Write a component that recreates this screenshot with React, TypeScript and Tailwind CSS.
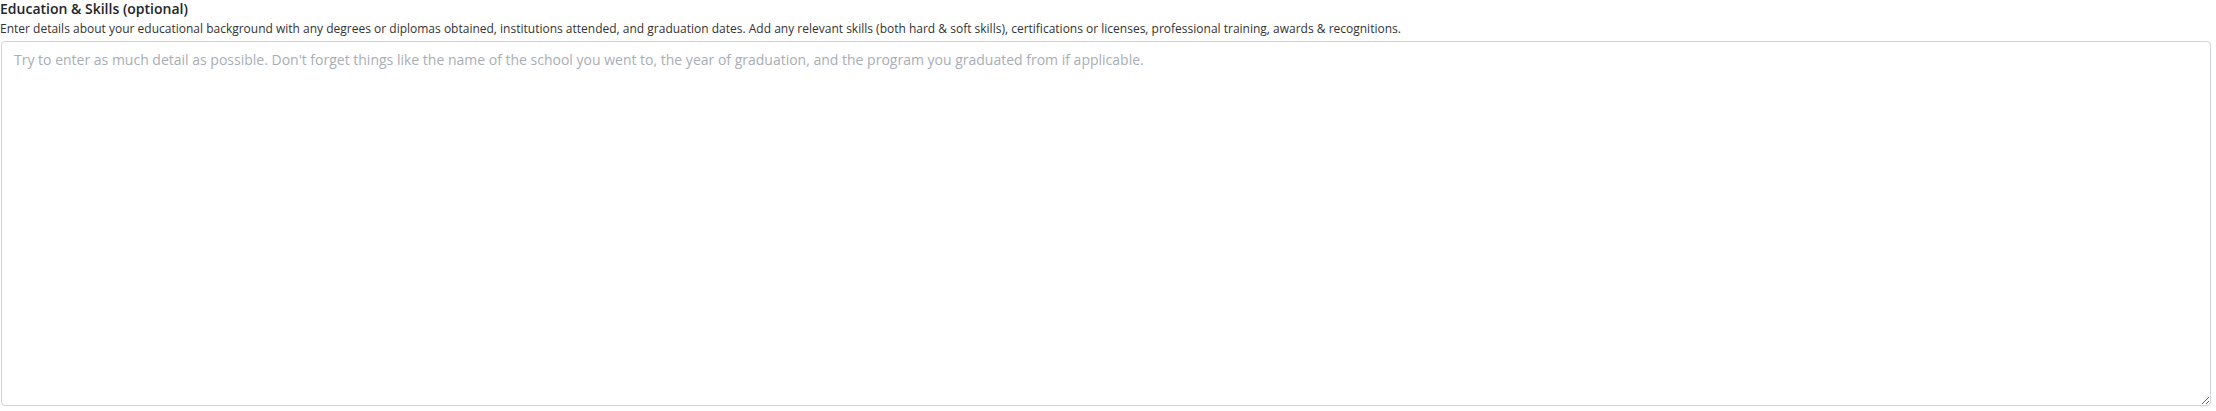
import React, { useState } from 'react';

export default function App() {
  const [value, setValue] = useState('');

  return (
    <div className="w-[2216px] h-[411px] bg-white font-['Open_Sans',sans-serif] pl-px">
      <div className="w-[2210px] flex flex-col">
        <label htmlFor="education" className="text-[14px] leading-[18px] font-semibold text-[#212529] -ml-px">
          Education &amp; Skills (optional)
        </label>
        <p className="text-[12px] leading-[16px] mt-[3px] text-[#333333] -ml-px">
          Enter details about your educational background with any degrees or diplomas obtained, institutions attended, and graduation dates. Add any relevant skills (both hard &amp; soft skills), certifications or licenses, professional training, awards &amp; recognitions.
        </p>
        <textarea
          id="education"
          value={value}
          onChange={(e) => setValue(e.target.value)}
          placeholder="Try to enter as much detail as possible. Don't forget things like the name of the school you went to, the year of graduation, and the program you graduated from if applicable."
          className="mt-[4px] h-[365px] w-full border border-[#ced4da] rounded-[4px] px-3 pt-[8px] pb-[7px] text-[14px] leading-[20px] text-[#495057] placeholder:text-[#a7aeb6] outline-none resize"
        />
      </div>
    </div>
  );
}
